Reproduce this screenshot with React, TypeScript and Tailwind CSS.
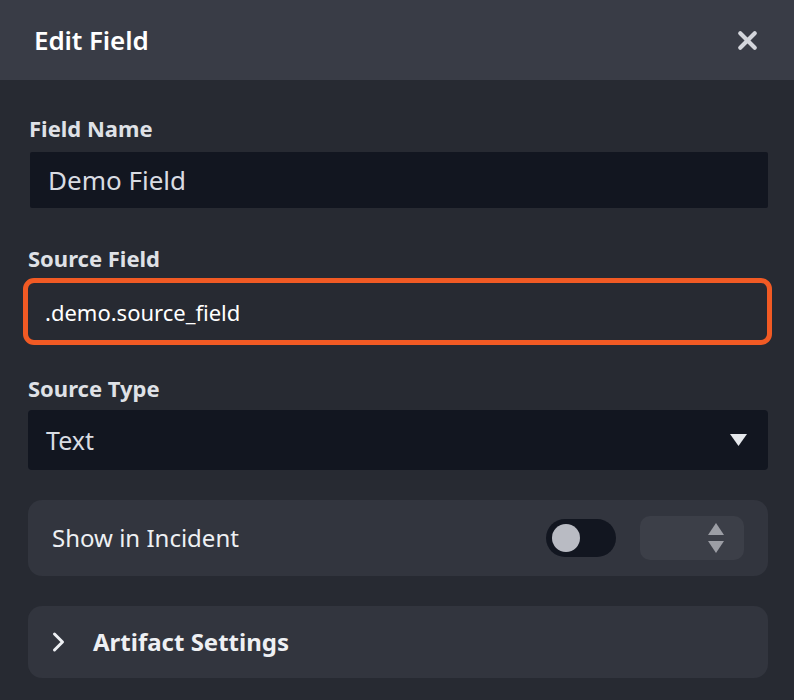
import { X } from "lucide-react";

const font = { fontFamily: '"Noto Sans", "Open Sans", sans-serif' };

const App = () => {
  return (
    <div className="w-[794px] h-[700px] bg-[#272a32] text-[#e4e6ea] overflow-hidden" style={font}>
      <div className="h-[80px] bg-[#393c46] flex items-center justify-between pl-[34px] pr-[32px]">
        <h2 className="text-[26px] font-semibold text-white tracking-[-0.1px] leading-[32px]">Edit Field</h2>
        <X className="w-[29px] h-[29px] text-[#d4d6dc]" strokeWidth={3.5} />
      </div>

      <div className="pl-[28px] pr-[26px] pt-[34px] flex flex-col">
        <label className="text-[22px] font-bold text-[#dfe1e6] leading-[28px] pl-[1px]">Field Name</label>
        <div className="mt-[10px] h-[56px] ml-[2px] bg-[#121620] rounded-[2px] flex items-center pl-[18px] text-[26px] text-[#d9dce2] leading-[32px]">
          Demo Field
        </div>

        <label className="mt-[36px] text-[22px] font-bold text-[#dfe1e6] leading-[28px]">Source Field</label>
        <div className="mt-[6px] -ml-[5px] -mr-[4px] h-[67px] border-[5px] border-[#f15a24] rounded-[11px] flex items-center pl-[17px] text-[22px] text-white leading-[28px]">
          .demo.source_field
        </div>

        <label className="mt-[29px] text-[22px] font-bold text-[#dfe1e6] leading-[28px]">Source Type</label>
        <div className="mt-[8px] h-[60px] bg-[#121620] rounded-[4px] flex items-center justify-between pl-[18px] pr-[21px] text-[25px] text-[#d9dce2] leading-[32px]">
          <span>Text</span>
          <svg width="17" height="13" viewBox="0 0 17 13">
            <path d="M0 0 L17 0 L8.5 12 Z" fill="#e6e8ec" />
          </svg>
        </div>

        <div className="mt-[30px] h-[76px] bg-[#32353e] rounded-[14px] flex items-center justify-between pl-[24px] pr-[24px]">
          <span className="text-[24px] text-[#eef0f3] leading-[32px]">Show in Incident</span>
          <div className="flex items-center gap-[24px]">
            <div className="w-[70px] h-[38px] rounded-full bg-[#121620] flex items-center pl-[6px]">
              <div className="w-[28px] h-[28px] rounded-full bg-[#b9bbc3]" />
            </div>
            <div className="w-[104px] h-[44px] rounded-[10px] bg-[#3c3f48] flex items-center justify-end pr-[20px]">
              <svg width="16" height="30" viewBox="0 0 16 30">
                <path d="M8 0 L16 12 L0 12 Z" fill="#9c9ea5" />
                <path d="M0 18 L16 18 L8 30 Z" fill="#9c9ea5" />
              </svg>
            </div>
          </div>
        </div>

        <div className="mt-[30px] h-[72px] bg-[#32353e] rounded-[14px] flex items-center pl-[23px]">
          <svg width="16" height="22" viewBox="0 0 16 22" fill="none">
            <path d="M3.5 3 L11.5 11 L3.5 19" stroke="#eef0f3" strokeWidth="3" strokeLinecap="round" strokeLinejoin="round" />
          </svg>
          <span className="ml-[26px] text-[24px] font-bold text-[#eef0f3] leading-[32px]">Artifact Settings</span>
        </div>
      </div>
    </div>
  );
};

export default App;
